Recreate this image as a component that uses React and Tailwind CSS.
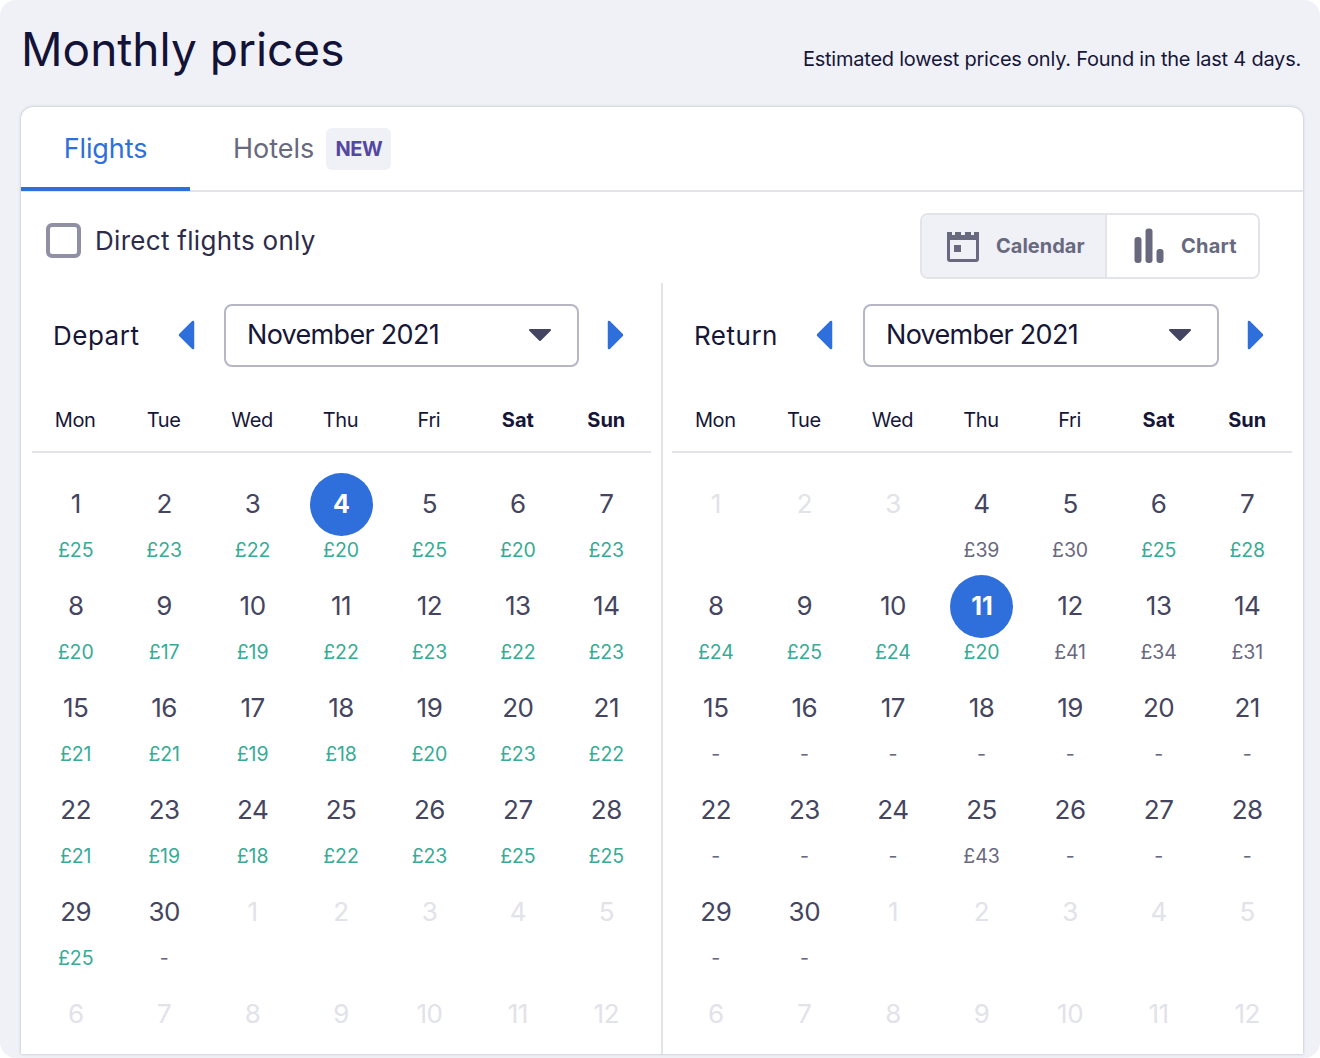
const FONT = "font-['Inter','Noto_Sans',sans-serif]";

const WEEK = ["Mon", "Tue", "Wed", "Thu", "Fri", "Sat", "Sun"];

// d = day number, p = price, g = price is green, off = day greyed out, sel = selected
const g = (d, p) => ({ d, p, g: true });
const n = (d, p = "-") => ({ d, p });
const off = (d) => ({ d, off: true });

const departDays = [
  g(1, "£25"), g(2, "£23"), g(3, "£22"), { ...g(4, "£20"), sel: true }, g(5, "£25"), g(6, "£20"), g(7, "£23"),
  g(8, "£20"), g(9, "£17"), g(10, "£19"), g(11, "£22"), g(12, "£23"), g(13, "£22"), g(14, "£23"),
  g(15, "£21"), g(16, "£21"), g(17, "£19"), g(18, "£18"), g(19, "£20"), g(20, "£23"), g(21, "£22"),
  g(22, "£21"), g(23, "£19"), g(24, "£18"), g(25, "£22"), g(26, "£23"), g(27, "£25"), g(28, "£25"),
  g(29, "£25"), n(30), off(1), off(2), off(3), off(4), off(5),
  off(6), off(7), off(8), off(9), off(10), off(11), off(12),
];

const returnDays = [
  off(1), off(2), off(3), n(4, "£39"), n(5, "£30"), g(6, "£25"), g(7, "£28"),
  g(8, "£24"), g(9, "£25"), g(10, "£24"), { ...g(11, "£20"), sel: true }, n(12, "£41"), n(13, "£34"), n(14, "£31"),
  n(15), n(16), n(17), n(18), n(19), n(20), n(21),
  n(22), n(23), n(24), n(25, "£43"), n(26), n(27), n(28),
  n(29), n(30), off(1), off(2), off(3), off(4), off(5),
  off(6), off(7), off(8), off(9), off(10), off(11), off(12),
];

const Arrow = ({ dir }) => (
  <svg width="17" height="30" viewBox="0 0 17 30" className="shrink-0">
    <path
      d={dir === "left" ? "M15 2 L2 15 L15 28 Z" : "M2 2 L15 15 L2 28 Z"}
      fill="#2e6fdb"
      stroke="#2e6fdb"
      strokeWidth="2.5"
      strokeLinejoin="round"
    />
  </svg>
);

const CalendarIcon = () => (
  <svg width="32" height="32" viewBox="0 0 32 32" className="shrink-0">
    <path
      d="M0 2h5v3h3V2h6v3h4V2h6v3h3V2h5v27a3 3 0 0 1-3 3H3a3 3 0 0 1-3-3Z"
      fill="#68697f"
    />
    <rect x="3" y="10" width="26" height="19" fill="#f0f1f7" />
    <rect x="7" y="15" width="7" height="7" fill="#68697f" />
  </svg>
);

const ChartIcon = () => (
  <svg width="30" height="36" viewBox="0 0 30 36" className="shrink-0">
    <rect x="0.5" y="9" width="7" height="26" rx="3" fill="#68697f" />
    <rect x="11.5" y="0.5" width="7" height="34.5" rx="3" fill="#68697f" />
    <rect x="22.5" y="21" width="7" height="14" rx="3" fill="#68697f" />
  </svg>
);

const DayCell = ({ day }) => (
  <div className="h-[102px] flex flex-col items-center pt-5">
    {day.sel ? (
      <div className="shrink-0 w-[63px] h-[63px] rounded-full bg-[#2e6fdb] text-white text-[25px] font-bold flex items-center justify-center">
        {day.d}
      </div>
    ) : (
      <div className={`shrink-0 h-[63px] pb-[2px] pr-[1px] flex items-center text-[26px] tracking-[-0.5px] ${day.off ? "text-[#e2e2e9]" : "text-[#444560]"}`}>
        {day.d}
      </div>
    )}
    {day.p && (
      <div className={`shrink-0 mt-[1px] pr-[1px] h-[26px] leading-[26px] text-[19.5px] tracking-[-0.1px] ${day.g ? "text-[#37ab95]" : "text-[#68697f]"}`}>
        {day.p}
      </div>
    )}
  </div>
);

const MonthColumn = ({ label, days, headClass, selectClass, gapClass, gridClass }) => (
  <div className="flex-1 min-w-0">
    <div className={`flex items-center h-[64px] mt-[20px] ${headClass}`}>
      <span className="w-[87px] text-[26px] tracking-[0.5px] text-[#161637]">{label}</span>
      <div className={`flex items-center gap-[28px] ${gapClass}`}>
        <Arrow dir="left" />
        <div className={`h-[63px] border-2 border-[#b6b6c6] rounded-lg flex items-center justify-between pl-[21px] pr-[25px] ${selectClass}`}>
          <span className="text-[27px] tracking-[-0.7px] text-[#161637]">November 2021</span>
          <svg width="24" height="14" viewBox="0 0 24 14">
            <path d="M2 2 H22 L12 12 Z" fill="#444560" stroke="#444560" strokeWidth="2" strokeLinejoin="round" />
          </svg>
        </div>
        <Arrow dir="right" />
      </div>
    </div>
    <div className={gridClass}>
      <div className="grid grid-cols-7 h-[86px] pt-[39px] border-b-2 border-[#e3e3ea]">
        {WEEK.map((w) => (
          <div
            key={w}
            className={`text-center text-[20px] leading-[28px] ${w === "Sat" || w === "Sun" ? "pr-[1px] tracking-[0px] font-bold text-[#161637]" : "pr-[2px] tracking-[-0.4px] text-[#161637]"}`}
          >
            {w}
          </div>
        ))}
      </div>
      <div className="grid grid-cols-7">
        {days.map((day, i) => (
          <DayCell key={i} day={day} />
        ))}
      </div>
    </div>
  </div>
);

const App = () => {
  return (
    <div className={`w-[1320px] h-[1058px] overflow-hidden rounded-2xl bg-[#f0f1f7] pl-[21px] pr-[17px] ${FONT}`}>
      <div className="h-[107px] flex justify-between pr-[2px]">
        <h1 className="pt-[19px] text-[46px] leading-[60px] tracking-[0px] text-[#131338]">Monthly prices</h1>
        <p className="pt-[46px] text-[20px] leading-[26px] tracking-[-0.23px] text-[#161637] whitespace-nowrap">
          Estimated lowest prices only. Found in the last 4 days.
        </p>
      </div>

      <div className="h-[947px] overflow-hidden rounded-t-xl bg-white shadow-[0_0_3px_rgba(37,32,80,0.3)]">
        <div className="h-[85px] flex items-center border-b-2 border-[#e3e3ea]">
          <div className="w-[169px] h-[85px] flex items-center justify-center pt-[6px] border-b-4 border-[#2e6fdb] text-[27px] tracking-[-0.1px] text-[#2e6fdb]">
            Flights
          </div>
          <div className="ml-[43px] flex items-center gap-3">
            <span className="pt-[2px] text-[27px] tracking-[0px] text-[#68697f]">Hotels</span>
            <span className="w-[65px] h-[42px] rounded-md bg-[#f0f1f7] flex items-center justify-center text-[20px] font-bold tracking-[-0.5px] text-[#54479f]">
              NEW
            </span>
          </div>
        </div>

        <div className="h-[91px] flex justify-between pl-[25px] pr-[43px]">
          <label className="flex items-center gap-[14px] h-[34px] mt-[31px]">
            <span className="w-[35px] h-[35px] rounded-md border-[4px] border-[#8f90a3] bg-white" />
            <span className="text-[26px] tracking-[0.3px] text-[#2c2c4a]">Direct flights only</span>
          </label>
          <div className="mt-[21px] h-[66px] flex rounded-lg border-2 border-[#e3e3ea] overflow-hidden">
            <div className="w-[185px] flex items-center justify-start pl-[25px] gap-[17px] bg-[#f0f1f7] border-r-2 border-[#e3e3ea]">
              <CalendarIcon />
              <span className="text-[20px] font-bold text-[#68697f]">Calendar</span>
            </div>
            <div className="w-[151px] flex items-center justify-start pl-[27px] gap-[17px] bg-white">
              <ChartIcon />
              <span className="text-[20px] font-bold tracking-[0.2px] text-[#68697f]">Chart</span>
            </div>
          </div>
        </div>

        <div className="flex">
          <div className="w-[642px] border-r-2 border-[#e3e3ea]">
            <MonthColumn
              label="Depart"
              days={departDays}
              headClass="pl-[32px]"
              gapClass="ml-[38px]"
              selectClass="w-[355px] ml-[1px]"
              gridClass="ml-[11px] mr-[10px]"
            />
          </div>
          <div className="flex-1 min-w-0">
            <MonthColumn
              label="Return"
              days={returnDays}
              headClass="pl-[31px]"
              gapClass="ml-[35px]"
              selectClass="w-[356px] ml-[2px]"
              gridClass="ml-[9px] mr-[11px]"
            />
          </div>
        </div>
      </div>
    </div>
  );
};

export default App;
